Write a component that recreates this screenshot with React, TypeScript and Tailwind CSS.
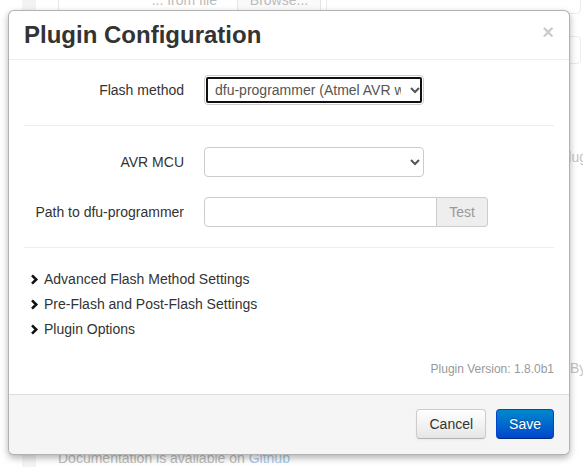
function Chevron() {
  return (
    <svg width="9" height="11" viewBox="0 0 9 11" className="ml-[6px] mr-[5px] shrink-0">
      <path d="M2 1.4 L6.2 5.5 L2 9.6" fill="none" stroke="#111" strokeWidth="2.6" />
    </svg>
  );
}

function Row({ label, children, last }: { label: string; children: React.ReactNode; last?: boolean }) {
  return (
    <div className={`flex ${last ? "" : "mb-[20px]"}`}>
      <label className="w-[160px] shrink-0 pt-[5px] text-right leading-5 text-[#333]">{label}</label>
      <div className="ml-[20px]">{children}</div>
    </div>
  );
}

export default function App() {
  const sections = ["Advanced Flash Method Settings", "Pre-Flash and Post-Flash Settings", "Plugin Options"];

  return (
    <div className="relative h-[467px] w-[583px] overflow-hidden bg-white font-['Liberation_Sans',Arial,sans-serif] text-[14px] leading-5 text-[#333]">
      {/* page behind the dialog */}
      <div className="flex h-full">
        <div className="ml-[22px] w-[14px] shrink-0 bg-[#f3f3f3]" />
        <div className="ml-[22px] flex w-[263px] shrink-0 flex-col">
          <div className="mt-[-13px] flex h-[26px]">
            <div className="flex w-[180px] items-center justify-end rounded-l-[4px] border border-[#e6e6e6] pr-[20px] text-[#bbb]">
              ... from file
            </div>
            <div className="flex w-[83px] items-center justify-center rounded-r-[4px] border border-l-0 border-[#e6e6e6] bg-[#fafafa] text-[#bbb]">
              Browse...
            </div>
          </div>
          <div className="flex-1" />
          <p className="mb-[-1px] whitespace-nowrap text-[#bdbdbd]">
            Documentation is available on <span className="text-[#a9c9e6]">Github</span>
          </p>
        </div>
        <div className="ml-[5px] flex w-[255px] shrink-0 flex-col">
          <div className="mt-[-20px] h-[34px] rounded-[4px] border border-[#ececec]" />
          <div className="mt-[22px] h-[28px] rounded-[4px] border border-[#ececec]" />
          <div className="ml-[233px] mt-[83px] whitespace-nowrap text-[#c4c4c4]">Plugins</div>
          <div className="ml-[244px] mt-[191px] whitespace-nowrap text-[#c4c4c4]">By</div>
        </div>
      </div>

      {/* dialog */}
      <div className="absolute left-[8px] top-[10px] w-[562px] overflow-hidden rounded-[6px] border border-black/30 bg-white shadow-[0_3px_7px_rgba(0,0,0,0.3)]">
        <div className="flex items-start justify-between border-b border-[#eee] px-[15px] py-[9px]">
          <h3 className="text-[24px] font-bold leading-[30px] text-[#333]">Plugin Configuration</h3>
          <span className="mt-[2px] text-[20px] font-bold leading-5 text-black opacity-20">×</span>
        </div>

        <div className="p-[15px]">
          <Row label="Flash method" last>
            <select
              defaultValue="dfu"
              className="h-[30px] w-[220px] rounded-[4px] border border-[#ccc] bg-white px-[6px] text-[14px] text-[#555] outline-2 outline-[#101010] outline-offset-[-4px]"
            >
              <option value="dfu">dfu-programmer (Atmel AVR with DFU)</option>
            </select>
          </Row>
          <div className="my-[20px] border-t border-b border-t-[#eee] border-b-white" />
          <Row label="AVR MCU">
            <select className="h-[30px] w-[220px] rounded-[4px] border border-[#ccc] bg-white px-[6px] text-[14px] text-[#555]">
              <option value=""></option>
            </select>
          </Row>
          <Row label="Path to dfu-programmer" last>
            <div className="flex">
              <input
                type="text"
                className="h-[30px] w-[233px] rounded-l-[4px] border border-[#ccc] bg-white px-[6px] text-[#555]"
              />
              <button className="h-[30px] w-[51px] rounded-r-[4px] border border-l-0 border-[#ccc] bg-[#eee] text-[#999]">
                Test
              </button>
            </div>
          </Row>
          <div className="my-[20px] border-t border-b border-t-[#eee] border-b-white" />

          <div className="flex flex-col gap-[5px]">
            {sections.map((s) => (
              <div key={s} className="flex items-center leading-5 text-[#333]">
                <Chevron />
                <span>{s}</span>
              </div>
            ))}
          </div>

          <div className="mt-[20px] text-right text-[12px] leading-5 text-[#999]">Plugin Version: 1.8.0b1</div>
        </div>

        <div className="flex justify-end gap-[10px] border-t border-[#ddd] bg-[#f5f5f5] px-[15px] pb-[15px] pt-[14px]">
          <button className="h-[30px] rounded-[4px] border border-[#ccc] border-b-[#b3b3b3] bg-linear-to-b from-white to-[#e6e6e6] px-[12px] text-[#333] shadow-[0_1px_2px_rgba(0,0,0,0.05)]">
            Cancel
          </button>
          <button className="h-[30px] rounded-[4px] border border-[#0044cc] border-b-[#002a80] bg-linear-to-b from-[#0088cc] to-[#0044cc] px-[12px] text-white [text-shadow:0_-1px_0_rgba(0,0,0,0.25)]">
            Save
          </button>
        </div>
      </div>
    </div>
  );
}
